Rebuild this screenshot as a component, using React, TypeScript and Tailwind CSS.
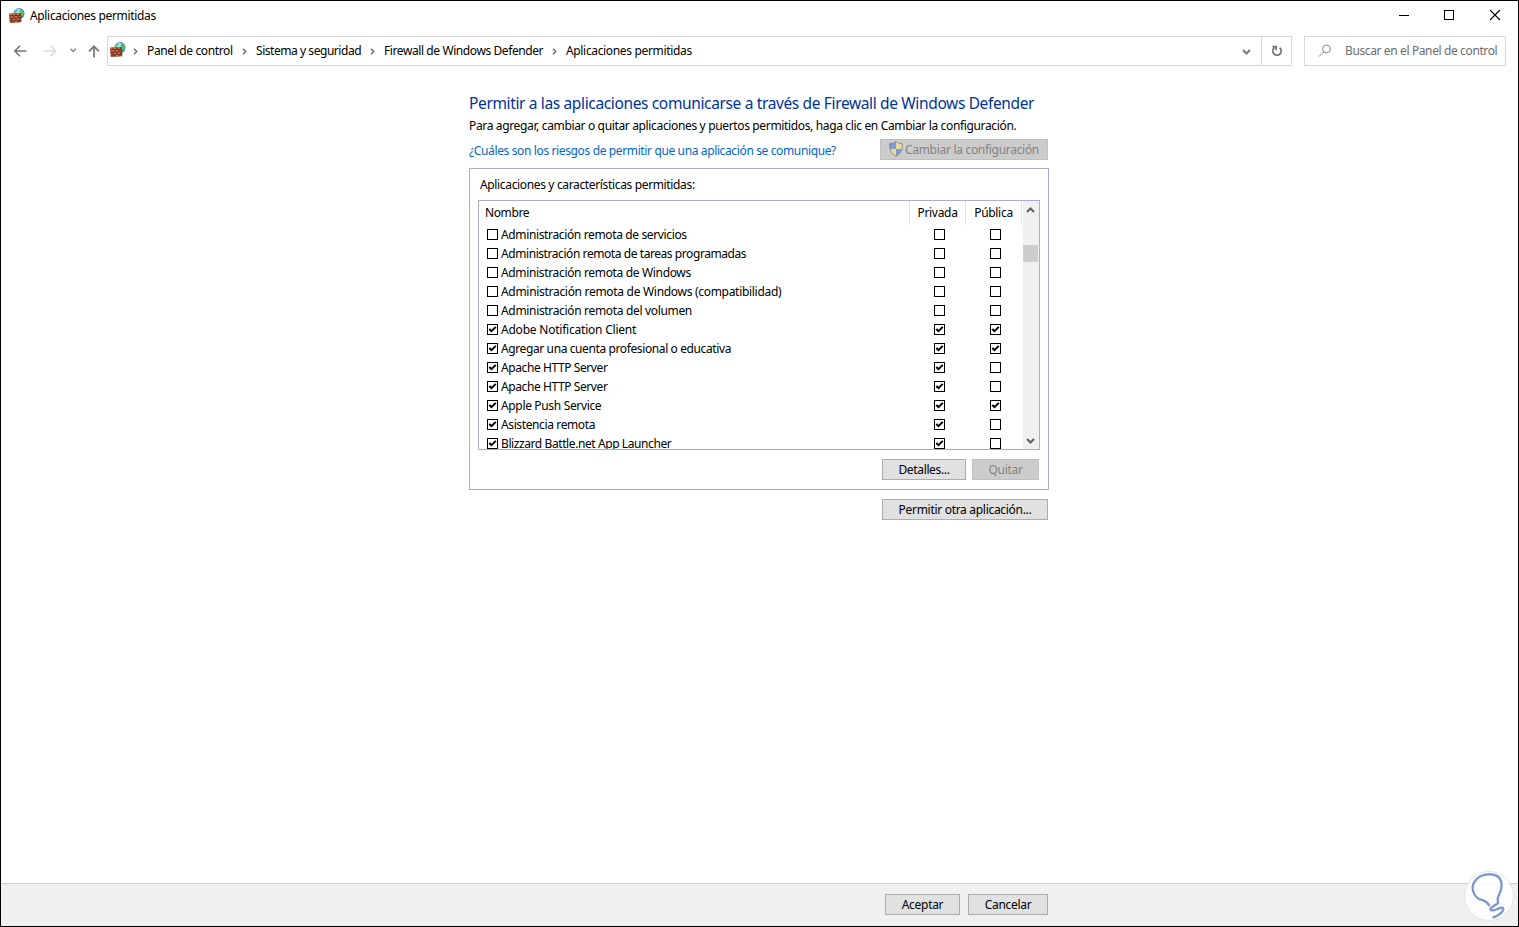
import React from 'react';

const FONT = "font-['Noto_Sans','Open_Sans',sans-serif]";

function FirewallIcon() {
  return (
    <svg width="16" height="16" viewBox="0 0 16 16" className="block shrink-0">
      <circle cx="10" cy="5.500" r="5.500" fill="#2f7fd6" />
      <circle cx="8.600" cy="3.800" r="3.200" fill="#a9e0fa" />
      <path d="M5.500 3 7.800.9l1 1-1 1.800-1.800 1.300zM10.500.7l2.500.9 2 2.900-.8 3.500-2-.6-.7-2.200-1.500-1.500 1.500-1.200z" fill="#5cc24c" />
      <path d="M0 5.600 11.800 5l.7 9.200L.8 15z" fill="#a9522f" />
      <path d="M0 8 12 7.400M.3 10.600l12-.8M.6 13.100 12.400 12.300M3 5.600v2.200M7 5.300v2.200M10.800 5.200v2M5 7.900v2.400M9 7.700V10M3 10.500v2.300M7 10.200v2.300M11 9.900v2.200M5 12.900v1.800M9 12.500v2" stroke="#632a1b" strokeWidth=".7" />
      <path d="M.7 6.500h1.700M3.800 6.300h2.300M7.800 6.100H10M5.800 8.800h2.400M1.500 9h2.800M3.800 11.500h2.300M7.800 11.100H10M5.800 13.600h2.300" stroke="#da8a5f" strokeWidth=".9" />
    </svg>
  );
}

function Shield() {
  return (
    <svg width="14" height="16" viewBox="0 0 14 16" className="mb-[2px] block shrink-0">
      <path d="M7 .5C5 2 3 2.500.6 2.600c0 6 1.400 10 6.400 12.800 5-2.800 6.400-6.800 6.400-12.800C11 2.500 9 2 7 .5z" fill="#e8dca0" />
      <path d="M7 .8V8H1.200C.8 6.400.7 4.500.7 2.700 3 2.600 5 2.100 7 .8zM7 8h5.800c-.8 3.400-2.600 5.600-5.800 7.300z" fill="#7f9cd0" />
      <path d="M7 .6C5 2 3 2.500.6 2.600c0 6 1.400 10 6.400 12.800 5-2.800 6.400-6.800 6.400-12.800C11 2.500 9 2 7 .6z" fill="none" stroke="#8a8d93" />
    </svg>
  );
}

function Chevron({ dir, className = '' }: { dir: 'up' | 'down' | 'right'; className?: string }) {
  const d = { up: 'M1 6l3.500-3.500L8 6', down: 'M1 3l3.500 3.500L8 3', right: 'M3 1.700l2.800 2.800L3 7.300' }[dir];
  return (
    <svg width="9" height="9" viewBox="0 0 9 9" className={`block shrink-0 ${className}`}>
      <path d={d} fill="none" stroke="currentColor" strokeWidth={dir === 'right' ? 1.3 : 2} />
    </svg>
  );
}

function Check({ on }: { on: boolean }) {
  return (
    <span className="block size-[11px] shrink-0 border border-black bg-white">
      {on && (
        <svg width="9" height="9" viewBox="0 0 9 9" className="block">
          <path d="M1.300 4 3.500 6.200 7.800 1.900" fill="none" stroke="#000" strokeWidth="2" />
        </svg>
      )}
    </span>
  );
}

function Button({ children, className, disabled }: { children: React.ReactNode; className: string; disabled?: boolean }) {
  return (
    <button
      disabled={disabled}
      className={`flex h-[21px] items-center justify-center border whitespace-nowrap ${disabled ? 'border-[#bfbfbf] bg-[#cccccc] text-[#838383]' : 'border-[#adadad] bg-[#e1e1e1] text-black'} ${className}`}
    >
      {children}
    </button>
  );
}

const rows: [string, boolean, boolean, boolean, string][] = [
  ['Administración remota de servicios', false, false, false, 'tracking-[-0.36px]'],
  ['Administración remota de tareas programadas', false, false, false, 'tracking-[-0.43px]'],
  ['Administración remota de Windows', false, false, false, 'tracking-[-0.34px]'],
  ['Administración remota de Windows (compatibilidad)', false, false, false, 'tracking-[-0.3px]'],
  ['Administración remota del volumen', false, false, false, 'tracking-[-0.33px]'],
  ['Adobe Notification Client', true, true, true, 'tracking-[-0.22px]'],
  ['Agregar una cuenta profesional o educativa', true, true, true, 'tracking-[-0.39px]'],
  ['Apache HTTP Server', true, true, false, 'tracking-[-0.41px]'],
  ['Apache HTTP Server', true, true, false, 'tracking-[-0.41px]'],
  ['Apple Push Service', true, true, true, 'tracking-[-0.34px]'],
  ['Asistencia remota', true, true, false, 'tracking-[-0.38px]'],
  ['Blizzard Battle.net App Launcher', true, true, false, 'tracking-[-0.41px]'],
];

export default function App() {
  return (
    <div className={`flex h-[927px] w-[1519px] flex-col overflow-hidden border border-black bg-white text-[12px] leading-[16px] tracking-[-0.3px] text-black ${FONT}`}>
      <header className="flex h-[29px] shrink-0 items-center pl-2">
        <FirewallIcon />
        <span className="ml-[5px] flex-1 tracking-[-0.34px]">Aplicaciones permitidas</span>
        <svg width="103" height="12" viewBox="0 0 103 12" className="mr-[16px] mb-px block" fill="none" stroke="#000" shapeRendering="crispEdges">
          <path d="M0 6.500h10M45.500 1.500h9v9h-9z" />
          <path d="M91 1l10 10M101 1l-10 10" strokeWidth="1.100" shapeRendering="auto" />
        </svg>
      </header>

      <nav className="mt-[6px] flex h-[30px] shrink-0 items-center">
        <svg width="106" height="30" viewBox="0 0 106 30" className="block shrink-0" fill="none">
          <path d="M14 15h11.500M19 9.800 13.800 15l5.200 5.200" stroke="#767676" strokeWidth="1.500" />
          <path d="M43 15h11.500M49.500 9.800l5.200 5.200-5.200 5.200" stroke="#dcdcdc" strokeWidth="1.500" />
          <path d="M69.500 12.800l2.700 2.700 2.700-2.700" stroke="#8a8a8a" strokeWidth="1.500" />
          <path d="M93 21.500V10.500M88 15.300l5-5 5 5" stroke="#767676" strokeWidth="1.700" />
        </svg>
        <div className="flex h-[30px] w-[1185px] shrink-0 border border-[#d9d9d9]">
          <div className="flex flex-1 items-center pl-[2px]">
            <div className="pb-[2px]">
              <FirewallIcon />
            </div>
            <Chevron dir="right" className="ml-[5px] text-[#666]" />
            <span className="ml-[7px] w-[93px] tracking-[-0.36px]">Panel de control</span>
            <Chevron dir="right" className="text-[#666]" />
            <span className="ml-[7px] w-[112px] tracking-[-0.45px]">Sistema y seguridad</span>
            <Chevron dir="right" className="text-[#666]" />
            <span className="ml-[7px] w-[166px] tracking-[-0.41px]">Firewall de Windows Defender</span>
            <Chevron dir="right" className="text-[#666]" />
            <span className="ml-[7px] flex-1 tracking-[-0.34px]">Aplicaciones permitidas</span>
            <Chevron dir="down" className="mt-px mr-[10px] text-[#777]" />
          </div>
          <div className="flex w-[30px] items-center justify-center border-l border-[#d9d9d9]">
            <svg width="12" height="12" viewBox="0 0 12 12" fill="none" stroke="#6d6d6d" strokeWidth="1.600">
              <path d="M8.600 2.700A4.200 4.200 0 1 1 3.400 2.700M1.500 1.600h3.700v3.700" />
            </svg>
          </div>
        </div>
        <div className="ml-3 flex h-[30px] w-[202px] items-center border border-[#d9d9d9] pl-[13px] text-[#6d6d6d]">
          <svg width="14" height="14" viewBox="0 0 14 14" fill="none" stroke="#85808a" strokeWidth="1">
            <circle cx="8.500" cy="5" r="3.900" />
            <path d="M5.700 7.800 1 12.500" />
          </svg>
          <span className="ml-[13px] tracking-[-0.38px] whitespace-nowrap">Buscar en el Panel de control</span>
        </div>
      </nav>

      <main className="ml-[468px] flex w-[580px] flex-1 flex-col pt-[27px]">
        <h1 className="h-[20px] text-[15.5px] leading-[20px] tracking-[-0.36px] whitespace-nowrap text-[#003399]">
          Permitir a las aplicaciones comunicarse a través de Firewall de Windows Defender
        </h1>
        <p className="mt-[5px] tracking-[-0.35px] whitespace-nowrap">Para agregar, cambiar o quitar aplicaciones y puertos permitidos, haga clic en Cambiar la configuración.</p>
        <div className="mt-[5px] flex h-[21px] items-center justify-between pr-px">
          <a className="pt-[3px] tracking-[-0.37px] whitespace-nowrap text-[#0066cc]">¿Cuáles son los riesgos de permitir que una aplicación se comunique?</a>
          <Button disabled className="w-[168px]">
            <Shield />
            <span className="ml-[2px]">Cambiar la configuración</span>
          </Button>
        </div>

        <section className="mt-2 flex h-[322px] shrink-0 flex-col border border-[#acacd8] px-2">
          <p className="mt-[8px] ml-[2px] tracking-[-0.35px]">Aplicaciones y características permitidas:</p>
          <div className="mt-[7px] flex h-[250px] w-[562px] shrink-0 border border-[#acacd8]">
            <div className="flex flex-1 flex-col overflow-hidden">
              <div className="flex h-6 shrink-0 items-center">
                <span className="flex-1 pl-[6px] tracking-[-0.4px]">Nombre</span>
                <span className="flex h-6 w-14 items-center justify-center border-l border-[#e5e5e5]">Privada</span>
                <span className="flex h-6 w-14 items-center justify-center border-l border-[#e5e5e5]">Pública</span>
                <span className="h-6 w-[2px] border-l border-[#e5e5e5]" />
              </div>
              {rows.map(([name, a, b, c, track], i) => (
                <div key={i} className="flex h-[19px] shrink-0 items-center pl-2">
                  <Check on={a} />
                  <span className={`ml-[3px] flex-1 whitespace-nowrap ${track}`}>{name}</span>
                  <Check on={b} />
                  <span className="w-[45px]" />
                  <Check on={c} />
                  <span className="w-[22px]" />
                </div>
              ))}
            </div>
            <div className="flex w-4 flex-col items-center bg-[#f0f0f0] pt-[5px] pb-1 text-[#606060]">
              <Chevron dir="up" className="mr-px" />
              <div className="mt-[30px] mr-px h-[17px] w-[15px] bg-[#cdcdcd]" />
              <Chevron dir="down" className="mt-auto mr-px" />
            </div>
          </div>
          <div className="mt-[9px] flex justify-end gap-[6px] pr-[1px]">
            <Button className="w-[84px] tracking-[-0.35px]">Detalles...</Button>
            <Button disabled className="w-[67px]">Quitar</Button>
          </div>
        </section>
        <div className="mt-[9px] flex justify-end pr-px">
          <Button className="w-[166px]">Permitir otra aplicación...</Button>
        </div>
      </main>

      <footer className="relative flex h-[43px] shrink-0 border-t border-[#cccccc] bg-[#f0f0f0] pt-[10px] pl-[884px]">
        <Button className="w-[75px]">Aceptar</Button>
        <Button className="ml-2 w-[80px]">Cancelar</Button>
        <svg width="52" height="52" viewBox="0 0 52 52" className="absolute top-[-14px] right-[3px]" fill="none">
          <circle cx="26" cy="26" r="24.500" fill="#fff" fillOpacity=".85" stroke="#dfe3ee" />
          <path d="M26.300 35.300C24.500 33 23 31.200 20.300 30.300 16 29.500 13.500 28 11.500 24.500 9 20 9 15 12 11 15 6.500 20 4.500 25.300 4.300 31 4 36 6 37.800 10.500 40.500 18 36.500 23 35 27.500 34.400 29.500 35 31.500 35 33.200 32.500 35 28.500 36.700 27.500 39c-.3 2 3.500 1.600 6 .5 3.500-1.600 6.500-2.800 6.800-.8.300 3-5 7.500-10 8.600" stroke="#7e97cb" strokeWidth="2.300" strokeLinecap="round" strokeLinejoin="round" />
        </svg>
      </footer>
    </div>
  );
}
